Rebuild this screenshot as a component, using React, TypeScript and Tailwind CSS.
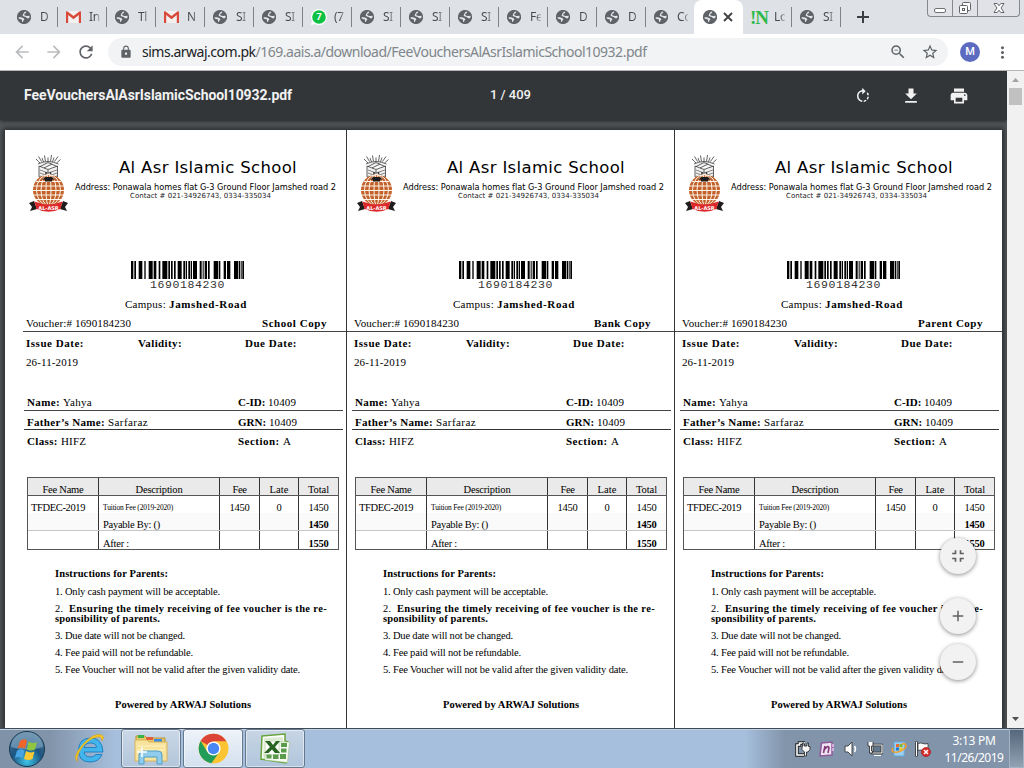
import React, { useLayoutEffect, useRef } from "react";
import {
  MdAdd, MdArrowBack, MdArrowForward, MdFileDownload, MdFullscreenExit, MdLock, MdMoreVert,
  MdPrint, MdRefresh, MdRemove, MdRotateRight, MdStarBorder, MdZoomOut,
} from "react-icons/md";

/* One line of text whose tracking is adjusted so that it spans w pixels. */
function Fit({ w, className = "", children }: { w: number; className?: string; children: React.ReactNode }) {
  const ref = useRef<HTMLSpanElement>(null);
  useLayoutEffect(() => {
    const el = ref.current;
    if (!el) return;
    el.style.letterSpacing = "0px";
    const n = (el.textContent || "").length;
    const spacing = (w - el.getBoundingClientRect().width) / Math.max(1, n);
    el.style.letterSpacing = spacing.toFixed(3) + "px";
  }, [w]);
  return (
    <span ref={ref} className={"inline-block shrink-0 whitespace-pre " + className}>
      {children}
    </span>
  );
}

function Globe() {
  return (
    <svg viewBox="0 0 14 14" className="h-[14px] w-[14px] shrink-0">
      <circle cx="7" cy="7" r="7.1" fill="#5f6368" />
      <path d="M8 1.600 9.400 2 8.600 3.200 7.400 3.800 7.200 5 8.400 5.800 10.400 6 12.600 5.800 12.500 7.600 11.300 8.600 9.800 8 8.800 7 6.800 6.600 5.600 5.600 6.400 3.400Z" fill="#e4e6ea" />
      <path d="M1.500 7.200 4 7.200 6.600 8.200 7.400 9.400 6.400 10.400 6 12.100 5.100 11.800 4.900 9.600 3 9 1.700 8.600Z" fill="#e4e6ea" />
    </svg>
  );
}

function Gmail() {
  return (
    <svg viewBox="0 0 15 12" className="h-[12px] w-[15px] shrink-0">
      <path d="M1 0h13v12H1z" fill="#f4f0ef" />
      <path d="M0 1.2C0 .2 1 0 1.6.4L7.5 5 13.4.4C14 0 15 .2 15 1.2V12h-2.2V4L7.5 8.2 2.2 4v8H0Z" fill="#d84a3c" />
    </svg>
  );
}

function WhatsApp() {
  return (
    <svg viewBox="0 0 16 16" className="h-4 w-4 shrink-0">
      <path d="M8 0a8 8 0 1 1-4 14.9L0 16l1.1-4A8 8 0 0 1 8 0Z" fill="#fff" />
      <circle cx="8" cy="8" r="6.8" fill="#0cc143" />
      <text x="8" y="11.4" textAnchor="middle" fontSize="9.5" fontWeight="700" fill="#fff" fontFamily="Roboto, sans-serif">7</text>
    </svg>
  );
}

const tabs: [string, string][] = [
  ["globe", "D"], ["gmail", "In"], ["globe", "Tl"], ["gmail", "N"], ["globe", "SI"], ["globe", "SI"], ["wa", "(7"],
  ["globe", "SI"], ["globe", "SI"], ["globe", "SI"], ["globe", "Fe"], ["globe", "D"], ["globe", "D"], ["globe", "Co"],
  ["active", ""], ["note", "Lo"], ["globe", "SI"],
];

function TabStrip() {
  return (
    <div className="flex h-[34px] shrink-0 items-start bg-[#dee1e6] pl-[9px]">
      {tabs.map(([kind, label], i) =>
        kind === "active" ? (
          <div key={i} className="-ml-px flex h-[34px] w-[49px] shrink-0 items-center rounded-t-[8px] bg-white pl-[9px]">
            <Globe />
            <svg viewBox="0 0 10 10" className="ml-[6px] h-[10px] w-[10px]"><path d="M1 1l8 8M9 1l-8 8" stroke="#3c4043" strokeWidth="1.800" /></svg>
          </div>
        ) : (
          <div key={i} className="flex h-[34px] w-[49px] shrink-0 items-center justify-between">
            <div className="flex items-center">
              <div className="flex w-[31px] items-center pl-[8px]">
                {kind === "globe" && <Globe />}
                {kind === "gmail" && <Gmail />}
                {kind === "wa" && <WhatsApp />}
                {kind === "note" && <span className="-ml-[1px] font-['Liberation_Serif',serif] text-[19px] leading-[17px] font-bold tracking-[-1px] text-[#2eb94a]">!N</span>}
              </div>
              <span className="w-[11px] overflow-hidden bg-linear-to-r from-[#45484c] from-50% to-[#b9bcc1] bg-clip-text text-[12px] leading-4 tracking-[-0.3px] whitespace-nowrap text-transparent">{label}</span>
            </div>
            <span className={i === 13 ? "h-5 w-px" : "h-5 w-px bg-[#808387]"} />
          </div>
        ),
      )}
      <svg viewBox="0 0 12 12" className="mt-[11px] ml-[16px] h-[12px] w-[12px] shrink-0"><path d="M6 0v12M0 6h12" stroke="#3c4043" strokeWidth="2" /></svg>
      <div className="mr-[4px] ml-auto flex h-[17px] w-[93px] rounded-b-[4px] border border-t-0 border-[#85888d] bg-[#e0e2e7]">
        <div className="flex w-[25px] items-center justify-center border-r border-[#85888d]"><span className="mt-1 h-[5px] w-[12px] rounded-[2px] border border-[#6e7176] bg-white" /></div>
        <div className="flex w-[25px] items-center justify-center border-r border-[#85888d]">
          <svg viewBox="0 0 14 14" className="h-[14px] w-[14px]" fill="#fff" stroke="#5f6267"><rect x="4.5" y="1.5" width="8" height="8" rx="1" /><rect x="1.5" y="4.5" width="8" height="8" rx="1" /><rect x="4.5" y="7.5" width="2" height="2" /></svg>
        </div>
        <div className="flex flex-1 items-center justify-center">
          <svg viewBox="0 0 12 12" className="h-[12px] w-[12px]" fill="#fff" stroke="#62656a"><path d="M1 1.5h3.2L6 3.8l1.8-2.3H11L8 6l3 4.5H7.8L6 8.2l-1.8 2.3H1L4 6Z" /></svg>
        </div>
      </div>
    </div>
  );
}

function AddressBar() {
  return (
    <div className="flex h-[37px] shrink-0 items-center border-b border-[#b6b4b6] bg-white pl-[12px] text-[#5f6368]">
      <MdArrowBack className="h-5 w-5 text-[#babcbe]" />
      <MdArrowForward className="ml-[12px] h-5 w-5 text-[#babcbe]" />
      <MdRefresh className="ml-[12px] h-5 w-5" />
      <div className="ml-[12px] flex h-[28px] w-[840px] items-center rounded-full bg-[#f1f3f4] pl-[11px]">
        <MdLock className="h-[14px] w-[14px]" />
        <Fit w={504.500} className="ml-[9px] text-[14px] leading-5 text-[#80868b]">
          <span className="text-[#202124]">sims.arwaj.com.pk</span>/169.aais.a/download/FeeVouchersAlAsrIslamicSchool10932.pdf
        </Fit>
        <MdZoomOut className="ml-auto h-[18px] w-[18px]" />
        <MdStarBorder className="mr-[9px] ml-[14px] h-[18px] w-[18px]" />
      </div>
      <div className="ml-[12px] flex h-5 w-5 items-center justify-center rounded-full bg-[#5c6bc0] font-[Roboto,sans-serif] text-[11px] font-medium text-white">M</div>
      <MdMoreVert className="ml-[13px] h-[19px] w-[19px]" />
    </div>
  );
}

function PdfToolbar() {
  return (
    <div className="z-10 flex h-[49px] shrink-0 items-center bg-[#323639] pl-[24px] font-[Roboto,sans-serif] text-[#f1f1f1] shadow-[0_1px_4px_rgba(0,0,0,0.6)]">
      <div className="-mt-[1px] w-[466px]"><Fit w={268} className="text-[14px] font-bold">FeeVouchersAlAsrIslamicSchool10932.pdf</Fit></div>
      <Fit w={41} className="-mt-[2px] text-[13px] font-medium">1 / 409</Fit>
      <MdRotateRight className="ml-auto h-[18px] w-[18px]" />
      <MdFileDownload className="ml-[29px] h-[20px] w-[20px]" />
      <MdPrint className="mr-[38px] ml-[28px] h-[20px] w-[20px]" />
    </div>
  );
}

function Crest() {
  return (
    <svg viewBox="0 0 41 60" className="h-[60px] w-[41px] shrink-0">
      <g stroke="#3a3a3a" strokeWidth="0.8" fill="none">
        <path d="M8 5l4 4M10.500 2.500l3 5M14 4l1.500 4M16.500 1.500l1 6M20 3.500v4M23.500 1l-1 6.500M26 3.500l-1.500 4.500M30 2.500l-3.500 5M32.500 5.500l-4 3.500" />
        <path d="M10 10Q20 5 30.500 10M11 12v11l9 3.500 9.500-3.500V12L20 15.500ZM20 15.500v11M12 12.500l8-4 9 4M16 14l8-4" fill="#f1f1f1" />
        <path d="M12 16l8 3 9-3M12 19l8 3 9-3M12 22l8 3 9-3" strokeWidth="0.6" />
        <path d="M18 18v7M22.500 18v7" strokeWidth="1.600" />
      </g>
      <ellipse cx="20.500" cy="36" rx="15.500" ry="15.500" fill="#c2612a" />
      <g stroke="#fff5ea" strokeWidth="1" fill="none">
        <ellipse cx="20.500" cy="36" rx="2.500" ry="15.500" />
        <ellipse cx="20.500" cy="36" rx="7.500" ry="15.500" />
        <ellipse cx="20.500" cy="36" rx="12" ry="15.500" />
        <path d="M8 27.500h25M5 32h31M4 36.500h33M5 41h31M8 45.500h25" />
      </g>
      <path d="M14 26l3-3h7l3 3-3-.5v2h-7v-2Z" fill="#1d1a1a" />
      <path d="M1 49l5-2 3 8-7 2 2-4ZM40 49l-5-2-3 8 7 2-2-4Z" fill="#211c1c" />
      <path d="M6.500 47.500Q20.500 53 34.500 47.500l-2 7.500Q20.500 60.500 8.500 55Z" fill="#dc2a2a" />
      <text x="20.500" y="55.800" textAnchor="middle" fontSize="5" fontWeight="700" fill="#fff" fontFamily="DejaVu Sans, sans-serif">AL-ASR</text>
    </svg>
  );
}

const bars = [
  [0, 7], [10, 5], [23, 11], [40, 4], [53, 12], [68, 8], [83, 5], [94, 15], [112, 5], [120, 5], [129, 5], [140, 12],
  [157, 6], [165, 3], [172, 5], [179, 4], [186, 12], [206, 6], [215, 3], [221, 7], [231, 5], [248, 14], [264, 4],
  [278, 7], [288, 10], [309, 12], [323, 4], [329, 3], [334, 5],
];

const cell = "flex items-end justify-center";

function FeeTable() {
  return (
    <div className="ml-[7px] w-[312px] shrink-0 border border-[#555] text-[10.5px] leading-[11px]">
      <div className="grid h-[18px] grid-cols-[71px_121px_40px_39px_39px] divide-x divide-[#333] border-b border-[#555] bg-[#eaeaea]">
        <div className={cell}><Fit w={41}>Fee Name</Fit></div>
        <div className={cell}><Fit w={47}>Description</Fit></div>
        <div className={cell}><Fit w={14}>Fee</Fit></div>
        <div className={cell}><Fit w={19}>Late</Fit></div>
        <div className={cell}><Fit w={21}>Total</Fit></div>
      </div>
      <div className="grid h-[17px] grid-cols-[71px_121px_40px_39px_39px] divide-x divide-[#333]">
        <div className="flex items-end pl-[3px]"><Fit w={54}>TFDEC-2019</Fit></div>
        <div className="flex items-end pl-[4px] text-[7.5px]"><Fit w={70}>Tuition Fee (2019-2020)</Fit></div>
        <div className={cell}><Fit w={20}>1450</Fit></div>
        <div className={cell}>0</div>
        <div className={cell}><Fit w={20}>1450</Fit></div>
      </div>
      <div className="grid h-[18px] grid-cols-[71px_121px_40px_39px_39px] divide-x divide-[#333] border-b border-[#c6c6c6] bg-[#fafafa]">
        <div /><div className="flex items-end pl-[4px]"><Fit w={57}>Payable By: ()</Fit></div><div /><div />
        <div className={cell}><Fit w={20} className="font-bold">1450</Fit></div>
      </div>
      <div className="grid h-[18px] grid-cols-[71px_121px_40px_39px_39px] divide-x divide-[#333]">
        <div /><div className="flex items-end pl-[4px]"><Fit w={26}>After :</Fit></div><div /><div />
        <div className={cell}><Fit w={20} className="font-bold">1550</Fit></div>
      </div>
    </div>
  );
}

function Voucher({ copy, copyWidth, first, inset = "pr-[19px]" }: { copy: string; copyWidth: number; first?: boolean; inset?: string }) {
  return (
    <div className={"flex h-[598px] w-[328px] shrink-0 flex-col border-l pl-px font-['Liberation_Serif',serif] text-[11px] leading-[16px] text-black " + (first ? "border-transparent" : "border-[#333]")}>
      <div className="flex h-[131px] shrink-0 pt-[24px] pl-[8px] font-['DejaVu_Sans',sans-serif]">
        <Crest />
        <div className="ml-[6px] flex w-[262px] shrink-0 flex-col items-center">
          <Fit w={178} className="mt-[3px] ml-[4px] text-[16.5px] leading-[22px]">Al Asr Islamic School</Fit>
          <Fit w={261} className="mt-[3px] mr-px text-[8.2px] leading-[10px]">Address: Ponawala homes flat G-3 Ground Floor Jamshed road 2</Fit>
          <Fit w={141} className="mr-[11px] text-[7px] leading-[9px] text-[#222]">Contact # 021-34926743, 0334-335034</Fit>
        </div>
      </div>
      <svg viewBox="0 0 339 54" preserveAspectRatio="none" className="ml-[111px] h-[18px] w-[113px] shrink-0">
        {bars.map(([x, w]) => <rect key={x} x={x} y="0" width={w} height="54" />)}
      </svg>
      <Fit w={75} className="mb-[3px] ml-[130px] h-[12px] self-start font-['Liberation_Mono',monospace] text-[11.5px] leading-[12px] text-[#333]">1690184230</Fit>
      <div className="ml-[105px] flex h-[21px] shrink-0 pt-[2px]"><Fit w={44}>Campus: </Fit><Fit w={78} className="font-bold">Jamshed-Road</Fit></div>
      <div className={"flex h-[17px] shrink-0 items-center justify-between border-b border-[#444] " + inset + (first ? " ml-[3px] pl-[3px]" : " -ml-px pl-[7px]")}>
        <Fit w={105}>Voucher:# 1690184230</Fit>
        <Fit w={copyWidth} className="font-bold">{copy}</Fit>
      </div>
      <div className="flex h-[22px] shrink-0 items-center pl-[6px] font-bold">
        <div className="w-[112px]"><Fit w={58}>Issue Date:</Fit></div>
        <div className="w-[107px]"><Fit w={44}>Validity:</Fit></div>
        <Fit w={52}>Due Date:</Fit>
      </div>
      <div className="flex h-[39px] shrink-0 items-start pl-[6px]"><Fit w={52}>26-11-2019</Fit></div>
      <div className="ml-[4px] flex h-[18px] w-[319px] shrink-0 items-center border-b border-[#444] pt-px pl-[3px]">
        <div className="flex w-[211px]"><Fit w={36} className="font-bold">Name: </Fit><Fit w={29}>Yahya</Fit></div>
        <Fit w={30} className="font-bold">C-ID: </Fit><Fit w={28}>10409</Fit>
      </div>
      <div className="ml-[4px] flex h-[19px] w-[319px] shrink-0 items-center border-b border-[#333] pt-[4px] pl-[3px]">
        <div className="flex w-[211px]"><Fit w={81} className="font-bold">Father’s Name: </Fit><Fit w={40}>Sarfaraz</Fit></div>
        <Fit w={31} className="font-bold">GRN: </Fit><Fit w={28}>10409</Fit>
      </div>
      <div className="ml-[4px] flex h-[47px] w-[319px] shrink-0 items-start pt-[3px] pl-[3px]">
        <div className="flex w-[211px]"><Fit w={34} className="font-bold">Class: </Fit><Fit w={25}>HIFZ</Fit></div>
        <Fit w={45} className="font-bold">Section: </Fit><span>A</span>
      </div>
      <FeeTable />
      <div className="flex flex-col pt-[19px] pl-[35px] text-[10.5px] leading-[10px]">
        <div className="flex h-[18px]"><Fit w={113} className="font-bold">Instructions for Parents:</Fit></div>
        <div className="flex h-[17px]"><Fit w={165}>1. Only cash payment will be acceptable.</Fit></div>
        <div className="flex h-[10px]"><Fit w={14}>2.  </Fit><Fit w={258} className="font-bold">Ensuring the timely receiving of fee voucher is the re-</Fit></div>
        <div className="flex h-[17px]"><Fit w={105} className="font-bold">sponsibility of parents.</Fit></div>
        <div className="flex h-[17px]"><Fit w={130}>3. Due date will not be changed.</Fit></div>
        <div className="flex h-[17px]"><Fit w={138}>4. Fee paid will not be refundable.</Fit></div>
        <div className="flex h-[35px]"><Fit w={245}>5. Fee Voucher will not be valid after the given validity date.</Fit></div>
        <div className="flex pl-[60px]"><Fit w={136} className="font-bold">Powered by ARWAJ Solutions</Fit></div>
      </div>
    </div>
  );
}

const fab = "flex h-9 w-9 items-center justify-center rounded-full bg-[#f2f2f2] text-[#616161] shadow-[0_1px_4px_rgba(0,0,0,0.45)]";

function Viewer() {
  return (
    <div className="relative flex h-[657px] w-[1007px] flex-col overflow-hidden bg-[#525659]">
      <PdfToolbar />
      <div className="mt-[10px] ml-[5px] flex w-[997px] shrink-0 overflow-hidden bg-white pl-[13px] shadow-[0_0_5px_2px_rgba(0,0,0,0.5)]">
        <Voucher copy="School Copy" copyWidth={65} first />
        <Voucher copy="Bank Copy" copyWidth={57} inset="pr-[23px]" />
        <Voucher copy="Parent Copy" copyWidth={65} />
      </div>
      <div className="absolute top-[467px] left-[940px] flex flex-col">
        <div className={fab}><MdFullscreenExit className="h-5 w-5" /></div>
        <div className={fab + " mt-[24px]"}><MdAdd className="h-[18px] w-[18px]" /></div>
        <div className={fab + " mt-[10px]"}><MdRemove className="h-[18px] w-[18px]" /></div>
      </div>
    </div>
  );
}

function Scrollbar() {
  return (
    <div className="flex w-[17px] flex-col items-center bg-[#f1f1f1]">
      <svg viewBox="0 0 17 17" className="h-[17px] w-[17px]"><path d="M5 11h7L8.500 7Z" fill="#a3a3a3" /></svg>
      <div className="h-[17px] w-[13px] bg-[#c1c1c1]" />
      <svg viewBox="0 0 17 17" className="mt-auto h-[17px] w-[17px]"><path d="M5 6h7l-3.500 4Z" fill="#505050" /></svg>
    </div>
  );
}

function StartOrb() {
  return (
    <svg viewBox="0 0 38 38" className="mt-px ml-[8px] h-[38px] w-[38px]">
      <defs>
        <radialGradient id="orb" cx="50%" cy="85%" r="85%"><stop offset="0" stopColor="#3fc4e8" /><stop offset=".5" stopColor="#1c5580" /><stop offset="1" stopColor="#4f7695" /></radialGradient>
      </defs>
      <circle cx="19" cy="19" r="17.500" fill="url(#orb)" stroke="#16384f" />
      <path d="M3 17a16 15 0 0 1 32 0Q19 22 3 17" fill="#a9c7dc" opacity=".45" />
      <path d="M12 11q4-3 7-.5l-2 8q-4-2-7.500.3Z" fill="#f0652a" />
      <path d="M20.500 11.500q4 2.500 8.500.5l-2 7.500q-4 2-8 0Z" fill="#8fc640" />
      <path d="M9 20.500q4-2.500 7.500 0l-2 7.500q-3.500-2-7.500 0Z" fill="#49a4e4" />
      <path d="M18 21q4 2.500 8.500.5l-2 7.500q-4 2-8.500 0Z" fill="#fcc932" />
    </svg>
  );
}

function Explorer() {
  return (
    <svg viewBox="0 0 36 32" className="h-8 w-9">
      <path d="M3 3h9l2 2h18v22H3Z" fill="#e9c665" stroke="#b9923d" />
      <path d="M5 2h6v3H5z" fill="#37b34a" /><path d="M13 4h7v3h-7z" fill="#e25b3a" /><path d="M21 6h8v3h-8z" fill="#3a8de0" />
      <path d="M2 7h12l2 2h18v19H2Z" fill="#f7e39b" stroke="#d5b35d" />
      <path d="M4 13h28M4 17h28" stroke="#fff3c6" />
      <path d="M6 31V22q0-4 4-4h15q4 0 4 4v9h-5v-7H11v7Z" fill="#90cdec" stroke="#4f9ecb" />
      <path d="M9 14v10M4 19h10" stroke="#fff" strokeWidth="1.500" />
    </svg>
  );
}

function Chrome() {
  return (
    <svg viewBox="0 0 48 48" className="h-[31px] w-[31px]">
      <circle cx="24" cy="24" r="23" fill="#fbc433" />
      <path d="M24 24 4 12.500A23 23 0 0 1 44 13H24Z" fill="#dc4437" />
      <path d="M4.100 12.500A23 23 0 0 0 21 46.800L34 29 24 34 14.500 29.500Z" fill="#219d59" />
      <path d="M24 13h20a23 23 0 0 1-23 33.800L33.500 29.500Z" fill="#fbc433" />
      <circle cx="24" cy="24" r="11" fill="#fff" /><circle cx="24" cy="24" r="8.800" fill="#4687f3" />
    </svg>
  );
}

function Excel() {
  return (
    <svg viewBox="0 0 32 32" className="h-8 w-8">
      <path d="M3 3 26 1v7l3 1-2 21L2 26Z" fill="#fff" stroke="#65a43b" strokeWidth="1.500" />
      <path d="M5 5l19-1v5H7v15H4Z" fill="#dcebd1" />
      <path d="M20 9h10.500l-2 20.500L6 27V22h14Z" fill="#f6faf3" stroke="#8eb877" strokeWidth=".5" />
      <path d="M22 10h6v4h-6zM22 15.500h5.500v4H22zM21 21h6v5h-6zM14 21.500h5.500V26H14zM7.500 21.500h5v4h-5z" fill="#5b9b4e" />
      <path d="M6 8h5l3 4 3-4h4l-5 6 5 6h-5l-3-3.500-3.500 3.500H5l6-6Z" fill="#286522" />
    </svg>
  );
}

function Ie() {
  return (
    <svg viewBox="0 0 32 32" className="ml-[28px] h-8 w-8">
      <path d="M29 19H10q1 5 6 5 4 0 6-2.500h6Q25 29 16 29 4.500 29 4.500 17 5 5 17 5q11 0 12 14ZM10 14.500h12.500Q22 10 16.500 10T10 14.500Z" fill="#42b5ec" stroke="#2380c2" />
      <path d="M4 29Q-3 25 9 11 20-1 28 2q3 2 0 6 0-5-5-4Q14 6 7 16 1 26 4 29Z" fill="#f7c81e" stroke="#cf9b20" strokeWidth=".5" />
    </svg>
  );
}

const taskButton = "flex h-[39px] w-[60px] items-center justify-center rounded-[3px] border border-[#66788c] shadow-[inset_0_0_0_1px_rgba(255,255,255,0.5)]";

function Taskbar() {
  return (
    <div className="flex h-10 shrink-0 items-center border-t border-[#3f4b58] bg-[linear-gradient(90deg,#8092a8_0,#8294aa_50px,#a6bfdc_115px,#a6bfdc_745px,#8294aa_785px,#8294aa_100%)] shadow-[inset_0_1px_0_#c4d2e2]">
      <StartOrb />
      <Ie />
      <div className="ml-[15px] flex gap-[2px]">
        <div className={taskButton + " bg-linear-to-b from-[#cad7e6] to-[#b3c6db]"}><Explorer /></div>
        <div className={taskButton + " bg-linear-to-b from-[#eef3f9] to-[#d3e0ef]"}><Chrome /></div>
        <div className={taskButton + " bg-linear-to-b from-[#c8d5e4] to-[#b0c5dc]"}><Excel /></div>
      </div>
      <div className="ml-auto flex items-center gap-[8px]">
        <svg viewBox="0 0 16 16" className="h-4 w-4"><path d="M10 2H4.500v2H2v10h7" fill="none" stroke="#222" strokeWidth="3.500" /><path d="M10 2H4.500v2H2v10h7" fill="none" stroke="#fff" strokeWidth="1.600" /><path d="M7.500 5.500V2h1.500v3h3V2h1.500v3.500H15v3l-2 2.500h-1.500v4H9.500v-4L7 8.500v-3Z" fill="#f5f5f5" stroke="#222" strokeWidth=".8" /></svg>
        <svg viewBox="0 0 16 16" className="h-4 w-4"><path d="M2.500 2 13 1v13L1 15Z" fill="#f0e4f2" stroke="#8d5a9c" strokeWidth="1.500" /><path d="M13 3h2v3h-2zM13 7h2v3h-2z" fill="#d9aeda" /><path d="M4.500 12l1.500-7M5.500 8.500q4-5 4.500-1.500l-1 5" fill="none" stroke="#80397b" strokeWidth="1.600" /></svg>
        <svg viewBox="0 0 16 16" className="h-4 w-4"><path d="M2 5h3l4-4v14l-4-4H2Z" fill="#fff" stroke="#444" /><path d="M11.500 5q2 3 0 6" fill="none" stroke="#fff" strokeWidth="1.500" /></svg>
        <svg viewBox="0 0 16 16" className="h-4 w-4"><path d="M5 4h10v8H5z" fill="#64788b" stroke="#222" strokeWidth="2.600" /><path d="M5 4h10v8H5zM7 14.500h7" fill="none" stroke="#fff" strokeWidth="1.200" /><path d="M1 1v4h1.500v7h3v-2h-1V5H6V1" fill="#fff" stroke="#222" strokeWidth=".8" /></svg>
        <svg viewBox="0 0 16 16" className="h-4 w-4"><path d="M3 1h11l-1 14H3z" fill="#9bd0f3" stroke="#67a8d6" /><path d="M5 3h3v3H5z" fill="#ef6b2e" /><path d="M8.500 3h3v3h-3z" fill="#7fba35" /><path d="M5 6.500h3v3H5z" fill="#2579d0" /><path d="M8.500 6.500h3v3h-3z" fill="#f6c92e" /><path d="M2 7q-3 5 5 4 7-2 8-6 0-3-4-2" fill="none" stroke="#f1a12b" strokeWidth="1.500" /></svg>
        <svg viewBox="0 0 16 16" className="h-4 w-4"><path d="M3 2.500q3-1 5 0t5 0v7q-3 1-5 0t-5 0Z" fill="#fff" stroke="#333" strokeWidth=".8" /><path d="M1.500 .5v15" stroke="#333" strokeWidth="2.500" /><path d="M1.500 1v14" stroke="#fff" /><circle cx="11" cy="11" r="4.500" fill="#d92b2b" stroke="#a51919" strokeWidth=".7" /><path d="M9 9l4 4M13 9l-4 4" stroke="#fff" strokeWidth="1.500" /></svg>
      </div>
      <div className="ml-[13px] flex w-[60px] flex-col items-center text-[12px] leading-[17px] text-white">
        <Fit w={43}>3:13 PM</Fit>
        <Fit w={59}>11/26/2019</Fit>
      </div>
      <div className="ml-[5px] h-[39px] w-[15px] border border-[#a6b3c2] bg-linear-to-b from-[#56687d] to-[#93a2b4]" />
    </div>
  );
}

export default function App() {
  return (
    <div className="flex h-[768px] w-[1024px] flex-col overflow-hidden bg-white font-['Noto_Sans',sans-serif]">
      <TabStrip />
      <AddressBar />
      <div className="flex h-[657px] shrink-0">
        <Viewer />
        <Scrollbar />
      </div>
      <Taskbar />
    </div>
  );
}
